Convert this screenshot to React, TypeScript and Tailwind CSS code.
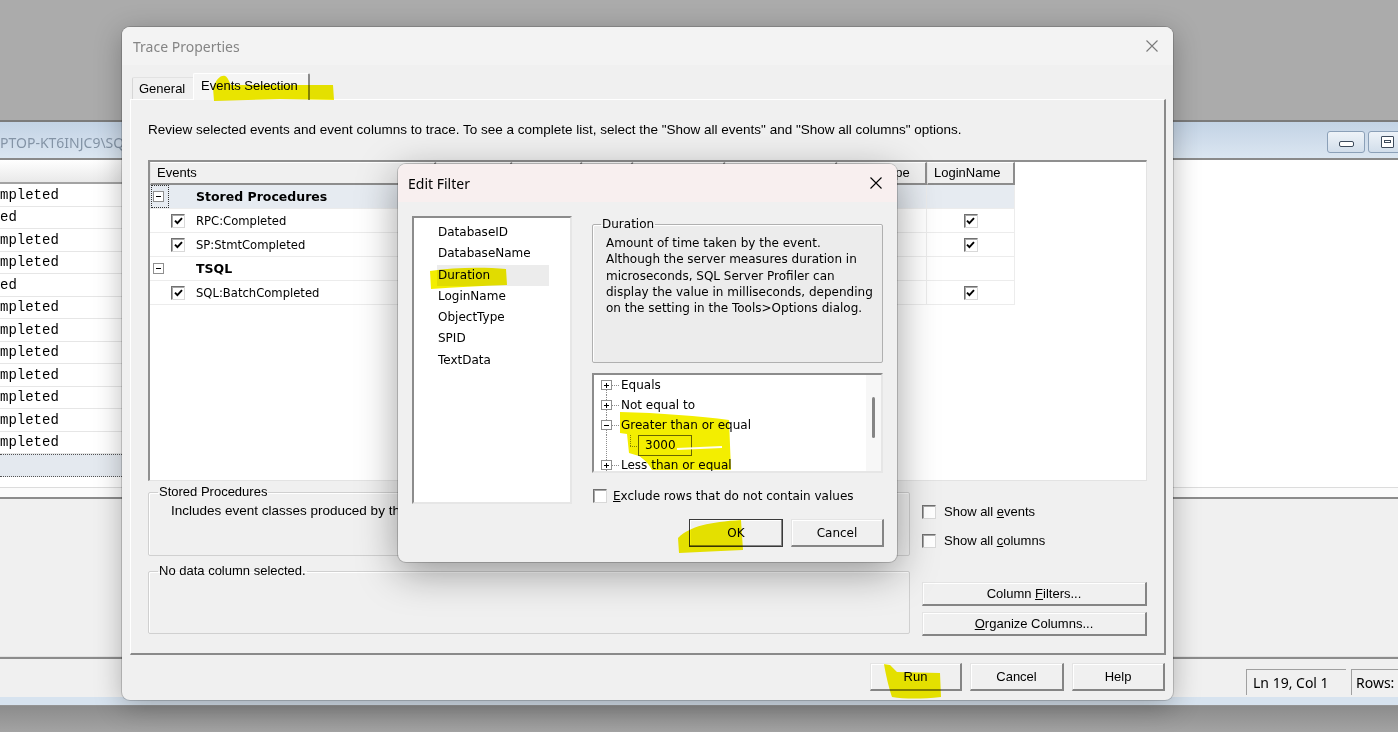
import React from "react";

function CloseX({ color = "#000" }: { color?: string }) {
  return (
    <svg width="12" height="12" viewBox="0 0 12 12" aria-hidden="true">
      <path d="M0.5 0.5 L11.5 11.5 M11.5 0.5 L0.5 11.5" stroke={color} strokeWidth="1.1" fill="none" />
    </svg>
  );
}

function Check() {
  return (
    <svg width="9" height="8" viewBox="0 0 9 8" aria-hidden="true">
      <path d="M1 3.6 L3.4 6.2 L8 1.2" fill="none" stroke="#000" strokeWidth="1.9" />
    </svg>
  );
}

const boxCls =
  "flex h-[14px] w-[14px] shrink-0 items-center justify-center border border-t-[#707070] border-l-[#707070] border-r-[#d8d8d8] border-b-[#d8d8d8] bg-white shadow-[inset_1px_1px_0_#a8a8a8]";

const btnCls =
  "flex items-center justify-center border-t border-l border-r-2 border-b-2 border-t-[#e4e4e4] border-l-[#e4e4e4] border-r-[#858585] border-b-[#858585] bg-[#f0f0f0] shadow-[inset_1px_1px_0_#ffffff]";

function GridCheck() {
  return (
    <span className={boxCls}>
      <Check />
    </span>
  );
}

function MinusBox() {
  return (
    <span className="flex h-[11px] w-[11px] items-center justify-center border border-[#8f8f8f] bg-white">
      <span className="h-px w-[5px] bg-black" />
    </span>
  );
}

function BgWindow() {
  const rows = [
    "mpleted",
    "ed",
    "mpleted",
    "mpleted",
    "ed",
    "mpleted",
    "mpleted",
    "mpleted",
    "mpleted",
    "mpleted",
    "mpleted",
    "mpleted",
  ];
  return (
    <div className="absolute left-0 top-[120px] flex h-[585px] w-[1398px] flex-col">
      {/* title bar */}
      <div className="flex h-[40px] items-center border-t-2 border-b-2 border-t-[#7b7b7b] border-b-[#8a8a8a] bg-gradient-to-b from-[#c3d3e5] to-[#dbe6f1] pt-[4px]">
        <span className="whitespace-nowrap font-['Noto_Sans',sans-serif] text-[14px] text-[#8494a6]">
          PTOP-KT6INJC9\SQLEXPRESS (sa)
        </span>
        <div className="ml-auto -mr-[8px] flex gap-[3px]">
          <div className="flex h-[22px] w-[38px] items-center justify-center rounded-[3px] border border-[#8ba0b8] bg-gradient-to-b from-[#eef3f8] to-[#d2deeb]">
            <span className="mt-[4px] h-[6px] w-[15px] rounded-[2px] border border-[#3d4b5c] bg-white" />
          </div>
          <div className="flex h-[22px] w-[38px] items-center justify-center rounded-[3px] border border-[#8ba0b8] bg-gradient-to-b from-[#eef3f8] to-[#d2deeb]">
            <span className="flex h-[12px] w-[13px] justify-center rounded-[1px] border border-[#3d4b5c] bg-white pt-[3px]">
              <span className="h-[3px] w-[7px] border border-[#3d4b5c]" />
            </span>
          </div>
        </div>
      </div>
      {/* results grid */}
      <div className="flex h-[327px] bg-white">
        <div className="w-[700px] shrink-0">
          <div className="h-[24px] border-b-2 border-[#a3a3a3] bg-gradient-to-b from-[#ffffff] to-[#e9e9e9]" />
          {rows.map((t, i) => (
            <div
              key={i}
              className="flex h-[22.5px] items-center border-b border-[#e6e6e6] font-['Liberation_Mono',monospace] text-[14px] leading-none text-black"
            >
              {t}
            </div>
          ))}
          <div className="h-[23px] border-y border-dotted border-[#555555] bg-[#e4e9ef]" />
        </div>
        <div className="flex-1" />
      </div>
      <div className="h-[10px] border-t border-[#dcdcdc] bg-[#fbfbfb]" />
      <div className="h-[2px] bg-[#8c8c8c]" />
      <div className="h-[158px] border-b border-[#e2e2e2] bg-[#f0f0f0]" />
      <div className="h-[2px] bg-[#8c8c8c]" />
      {/* status bar */}
      <div className="flex h-[38px] items-end justify-end border-t-[8px] border-[#f0f0f0] bg-[#f0f0f0] pb-[2px]">
        <div className="flex h-[26px] w-[100px] items-center border-t border-l border-[#a0a0a0] pl-[6px] font-['Noto_Sans',sans-serif] text-[14px] text-black">
          Ln 19, Col 1
        </div>
        <div className="-mr-[33px] ml-[5px] flex h-[26px] w-[80px] items-center border-t border-l border-[#a0a0a0] pl-[4px] font-['Noto_Sans',sans-serif] text-[14px] text-black">
          Rows:
        </div>
      </div>
      <div className="h-[8px] bg-[#d7e3ef]" />
    </div>
  );
}

type GridRow = { cat: boolean; label: string; focus?: boolean };

function EventsGrid() {
  const rows: GridRow[] = [
    { cat: true, label: "Stored Procedures", focus: true },
    { cat: false, label: "RPC:Completed" },
    { cat: false, label: "SP:StmtCompleted" },
    { cat: true, label: "TSQL" },
    { cat: false, label: "SQL:BatchCompleted" },
  ];
  const hdr =
    "flex h-full shrink-0 items-center overflow-hidden whitespace-nowrap border-l border-t border-b-2 border-r-2 border-l-[#e6e6e6] border-t-[#ffffff] border-b-[#8d8d8d] border-r-[#8d8d8d] bg-[#f0f0f0] pl-[6px] text-[13px]";
  return (
    <div className="mt-[22px] h-[321px] w-[999px] overflow-hidden border-t-2 border-l-2 border-r border-b border-t-[#8f8f8f] border-l-[#8f8f8f] border-r-[#e3e3e3] border-b-[#e3e3e3] bg-white">
      <div className="flex h-[23px]">
        <div className={`${hdr} w-[286px]`}>Events</div>
        <div className={`${hdr} w-[76px]`} />
        <div className={`${hdr} w-[70px]`} />
        <div className={`${hdr} w-[51px]`} />
        <div className={`${hdr} w-[92px]`} />
        <div className={`${hdr} w-[112px]`} />
        <div className={`${hdr} w-[90px]`}>ObjectType</div>
        <div className={`${hdr} w-[88px]`}>LoginName</div>
      </div>
      {rows.map((r, i) => (
        <div
          key={i}
          className={`flex h-[24px] w-[865px] border-b border-[#ececec] ${r.focus ? "bg-[#e6ebf1]" : "bg-white"}`}
        >
          <div className="flex h-full w-[286px] shrink-0 items-center border-r border-[#ececec]">
            <div className="flex h-full w-[21px] shrink-0 items-center">
              {r.cat && (
                <span
                  className={`ml-px flex h-[23px] w-[18px] items-center border pl-px ${
                    r.focus ? "border-dotted border-[#333333]" : "border-transparent"
                  }`}
                >
                  <MinusBox />
                </span>
              )}
            </div>
            {r.cat ? (
              <span className="ml-[25px] mt-[2px] whitespace-nowrap font-['DejaVu_Sans',sans-serif] text-[12.5px] font-bold text-black">
                {r.label}
              </span>
            ) : (
              <>
                <GridCheck />
                <span className="ml-[11px] mt-[2px] whitespace-nowrap font-['DejaVu_Sans',sans-serif] text-[11.6px] text-black">
                  {r.label}
                </span>
              </>
            )}
          </div>
          <div className="h-full w-[76px] shrink-0 border-r border-[#ececec]" />
          <div className="h-full w-[70px] shrink-0 border-r border-[#ececec]" />
          <div className="h-full w-[51px] shrink-0 border-r border-[#ececec]" />
          <div className="h-full w-[92px] shrink-0 border-r border-[#ececec]" />
          <div className="h-full w-[112px] shrink-0 border-r border-[#ececec]" />
          <div className="h-full w-[90px] shrink-0 border-r border-[#ececec]" />
          <div className="flex h-full w-[88px] shrink-0 items-center justify-center border-r border-[#ececec]">
            {!r.cat && <GridCheck />}
          </div>
        </div>
      ))}
    </div>
  );
}

function TraceDialog() {
  return (
    <div className="absolute left-[122px] top-[27px] flex h-[673px] w-[1051px] flex-col rounded-[8px] bg-[#f0f0f0] font-['Liberation_Sans',Arial,sans-serif] text-black shadow-[0_0_0_1px_rgba(0,0,0,0.16),0_6px_28px_rgba(0,0,0,0.28)]">
      <div className="flex h-[38px] items-center justify-between rounded-t-[8px] bg-[#f3f3f3] pl-[11px] pr-[15px]">
        <span className="font-['Noto_Sans',sans-serif] text-[14px] text-[#858585]">Trace Properties</span>
        <CloseX color="#7a7a7a" />
      </div>
      {/* tabs */}
      <div className="flex h-[34px] items-end pl-[10px]">
        <div className="flex h-[22px] w-[61px] items-center rounded-tl-[2px] border-l border-t border-l-[#d6d6d6] border-t-[#e2e2e2] bg-[#f0f0f0] pl-[6px] text-[13px]">
          General
        </div>
        <div className="relative z-10 -mb-px flex h-[27px] w-[117px] items-center rounded-t-[2px] border-l border-t border-r-2 border-l-[#ffffff] border-t-[#ffffff] border-r-[#8a8a8a] bg-[#f5f5f5] pb-[2px] pl-[7px] text-[13px]">
          Events Selection
        </div>
      </div>
      {/* tab panel */}
      <div className="ml-[8px] flex h-[556px] w-[1036px] flex-col border-t border-l border-r-2 border-b-2 border-t-[#ffffff] border-l-[#ffffff] border-r-[#8a8a8a] border-b-[#8a8a8a] pl-[17px] pr-[17px] pt-[22px]">
        <div className="h-[16px] whitespace-nowrap text-[13.5px] leading-[16px]">
          Review selected events and event columns to trace. To see a complete list, select the &quot;Show all events&quot; and &quot;Show all columns&quot; options.
        </div>
        <EventsGrid />
        <div className="mt-[4px] flex gap-[12px]">
          <div className="flex w-[762px] flex-col gap-[8px]">
            <fieldset className="h-[71px] rounded-[2px] border border-[#d0d0d0] shadow-[inset_1px_1px_0_#ffffff]">
              <legend className="ml-[9px] px-px text-[13px] leading-[14px]">Stored Procedures</legend>
              <div className="whitespace-nowrap pl-[22px] pt-[4px] text-[13.5px] leading-[16px]">
                Includes event classes produced by the execution of stored procedures.
              </div>
            </fieldset>
            <fieldset className="h-[70px] rounded-[2px] border border-[#d0d0d0] shadow-[inset_1px_1px_0_#ffffff]">
              <legend className="ml-[9px] px-px text-[13px] leading-[14px]">No data column selected.</legend>
            </fieldset>
          </div>
          <div className="flex w-[225px] flex-col pt-[18px]">
            <div className="flex h-[18px] items-center">
              <span className={boxCls} />
              <span className="ml-[8px] text-[13px]">
                Show all <span className="underline">e</span>vents
              </span>
            </div>
            <div className="mt-[11px] flex h-[18px] items-center">
              <span className={boxCls} />
              <span className="ml-[8px] text-[13px]">
                Show all <span className="underline">c</span>olumns
              </span>
            </div>
            <div className={`${btnCls} mt-[32px] h-[24px] w-[225px] text-[13px]`}>
              Column&nbsp;<span className="underline">F</span>ilters...
            </div>
            <div className={`${btnCls} mt-[6px] h-[24px] w-[225px] text-[13px]`}>
              <span className="underline">O</span>rganize Columns...
            </div>
          </div>
        </div>
      </div>
      {/* bottom buttons */}
      <div className="flex justify-end gap-[8px] pr-[8px] pt-[8px]">
        <div className={`${btnCls} h-[28px] w-[92px] text-[13px]`}>Run</div>
        <div className={`${btnCls} h-[28px] w-[94px] text-[13px]`}>Cancel</div>
        <div className={`${btnCls} h-[28px] w-[93px] text-[13px]`}>Help</div>
      </div>
    </div>
  );
}

function TreeGutter({ minus, top, bottom }: { minus: boolean; top: boolean; bottom: boolean }) {
  return (
    <svg width="19" height="20" viewBox="0 0 19 20" className="shrink-0" shapeRendering="crispEdges" aria-hidden="true">
      {top && <line x1="5.5" y1="0" x2="5.5" y2="5" stroke="#8c8c8c" strokeDasharray="1 1" />}
      {bottom && <line x1="5.5" y1="15" x2="5.5" y2="20" stroke="#8c8c8c" strokeDasharray="1 1" />}
      <line x1="11" y1="10.5" x2="18" y2="10.5" stroke="#8c8c8c" strokeDasharray="1 1" />
      <rect x="0.5" y="5.5" width="10" height="9" fill="#fff" stroke="#8f8f8f" />
      <line x1="3" y1="10.5" x2="8" y2="10.5" stroke="#000" />
      {!minus && <line x1="5.5" y1="8" x2="5.5" y2="13" stroke="#000" />}
    </svg>
  );
}

function EditFilter() {
  const items = ["DatabaseID", "DatabaseName", "Duration", "LoginName", "ObjectType", "SPID", "TextData"];
  return (
    <div className="absolute left-[398px] top-[164px] z-20 flex h-[398px] w-[499px] flex-col rounded-[8px] bg-[#f0f0f0] font-['DejaVu_Sans',sans-serif] text-[12px] text-black shadow-[0_0_0_1px_rgba(0,0,0,0.18),0_10px_40px_rgba(0,0,0,0.38)]">
      <div className="flex h-[38px] items-center justify-between rounded-t-[8px] bg-[#f8efef] pl-[10px] pr-[15px]">
        <span className="font-['Noto_Sans',sans-serif] text-[14px] text-black">Edit Filter</span>
        <CloseX />
      </div>
      <div className="flex gap-[20px] pl-[14px] pt-[14px]">
        {/* list box */}
        <div className="h-[288px] w-[160px] border-2 border-t-[#8c8c8c] border-l-[#8c8c8c] border-r-[#e6e6e6] border-b-[#e6e6e6] bg-white pl-[24px] pt-[4px]">
          {items.map((it) => (
            <div
              key={it}
              className={
                it === "Duration"
                  ? "-ml-px h-[21.3px] w-[112px] bg-[#ececec] pl-px leading-[21.3px]"
                  : "h-[21.3px] leading-[21.3px]"
              }
            >
              {it}
            </div>
          ))}
        </div>
        {/* right column */}
        <div className="flex w-[291px] flex-col">
          <fieldset className="h-[147px] rounded-[2px] border border-[#b0b0b0] bg-[#ececec] shadow-[inset_1px_1px_0_#ffffff]">
            <legend className="ml-[8px] px-px leading-[16px]">Duration</legend>
            <div className="whitespace-nowrap pl-[13px] pt-[3px] leading-[16.3px]">
              <div>Amount of time taken by the event.</div>
              <div>Although the server measures duration in</div>
              <div>microseconds, SQL Server Profiler can</div>
              <div>display the value in milliseconds, depending</div>
              <div>on the setting in the Tools&gt;Options dialog.</div>
            </div>
          </fieldset>
          {/* tree */}
          <div className="mt-[10px] flex h-[100px] overflow-hidden border-2 border-t-[#8c8c8c] border-l-[#8c8c8c] border-r-[#e6e6e6] border-b-[#e6e6e6] bg-white">
            <div className="flex-1 overflow-hidden pl-[7px]">
              <div className="flex h-[20px] items-center whitespace-nowrap">
                <TreeGutter minus={false} top={false} bottom={true} />
                <span className="ml-px">Equals</span>
              </div>
              <div className="flex h-[20px] items-center whitespace-nowrap">
                <TreeGutter minus={false} top={true} bottom={true} />
                <span className="ml-px">Not equal to</span>
              </div>
              <div className="flex h-[20px] items-center whitespace-nowrap">
                <TreeGutter minus={true} top={true} bottom={true} />
                <span className="ml-px">Greater than or equal</span>
              </div>
              <div className="flex h-[20px] items-center whitespace-nowrap">
                <svg width="37" height="20" viewBox="0 0 37 20" className="shrink-0" shapeRendering="crispEdges" aria-hidden="true">
                  <line x1="5.5" y1="0" x2="5.5" y2="20" stroke="#8c8c8c" strokeDasharray="1 1" />
                  <line x1="29.5" y1="0" x2="29.5" y2="11" stroke="#8c8c8c" strokeDasharray="1 1" />
                  <line x1="29" y1="11.5" x2="37" y2="11.5" stroke="#8c8c8c" strokeDasharray="1 1" />
                </svg>
                <div className="flex h-[21px] w-[54px] shrink-0 items-center border border-[#6e6e6e] pl-[6px]">3000</div>
              </div>
              <div className="flex h-[20px] items-center whitespace-nowrap">
                <TreeGutter minus={false} top={true} bottom={true} />
                <span className="ml-px">Less than or equal</span>
              </div>
            </div>
            <div className="flex w-[15px] shrink-0 justify-center bg-[#f7f7f7]">
              <div className="mt-[22px] h-[41px] w-[3px] rounded-full bg-[#858585]" />
            </div>
          </div>
          {/* exclude checkbox */}
          <div className="mt-[14px] flex h-[18px] items-center">
            <span className={`${boxCls} ml-px`} />
            <span className="ml-[6px] whitespace-nowrap">
              <span className="underline">E</span>xclude rows that do not contain values
            </span>
          </div>
          {/* buttons */}
          <div className="-mr-px mt-[14px] flex justify-end gap-[8px]">
            <div className="flex h-[28px] w-[94px] items-center justify-center border border-[#3a3a3a] bg-[#f0f0f0] shadow-[inset_-1px_-1px_0_#858585,inset_1px_1px_0_#ffffff]">
              OK
            </div>
            <div className={`${btnCls} h-[28px] w-[93px]`}>Cancel</div>
          </div>
        </div>
      </div>
    </div>
  );
}

function Highlights() {
  return (
    <>
      <svg
        className="pointer-events-none absolute left-0 top-0 z-30 mix-blend-multiply"
        width="1398"
        height="732"
        viewBox="0 0 1398 732"
        aria-hidden="true"
      >
        <g fill="#f3ee00">
          <path d="M213,88 C216,80 220,75 225,76 C228,77 229,82 231,85 L333,85 L334,100 L280,99 L214,101 Z" />
          <path d="M430,271 C455,267 485,267 506,269 L507,285 C480,286 455,287 431,289 Z" />
          <path d="M620,412 C660,413 700,416 729,420 L731,470 L652,470 C648,462 642,458 639,456 L629,453 L627,434 L620,433 Z" />
          <path d="M678,538 C690,526 710,522 741,520 L743,550 C720,551 700,552 679,553 Z" />
          <path d="M884,664 L890,665 L897,672 L940,673 L941,697 C922,699 905,699 892,697 C889,688 886,676 884,664 Z" />
        </g>
      </svg>
      <svg
        className="pointer-events-none absolute left-0 top-0 z-40"
        width="1398"
        height="732"
        viewBox="0 0 1398 732"
        aria-hidden="true"
      >
        <path d="M677,449 L722,447" stroke="#fffdf0" strokeWidth="2.2" fill="none" />
      </svg>
    </>
  );
}

export default function App() {
  return (
    <div className="relative h-[732px] w-[1398px] overflow-hidden bg-[linear-gradient(to_bottom,#ababab_0px,#ababab_704px,#8c8c8c_706px,#a3a3a3_732px)]">
      <BgWindow />
      <TraceDialog />
      <EditFilter />
      <Highlights />
    </div>
  );
}
